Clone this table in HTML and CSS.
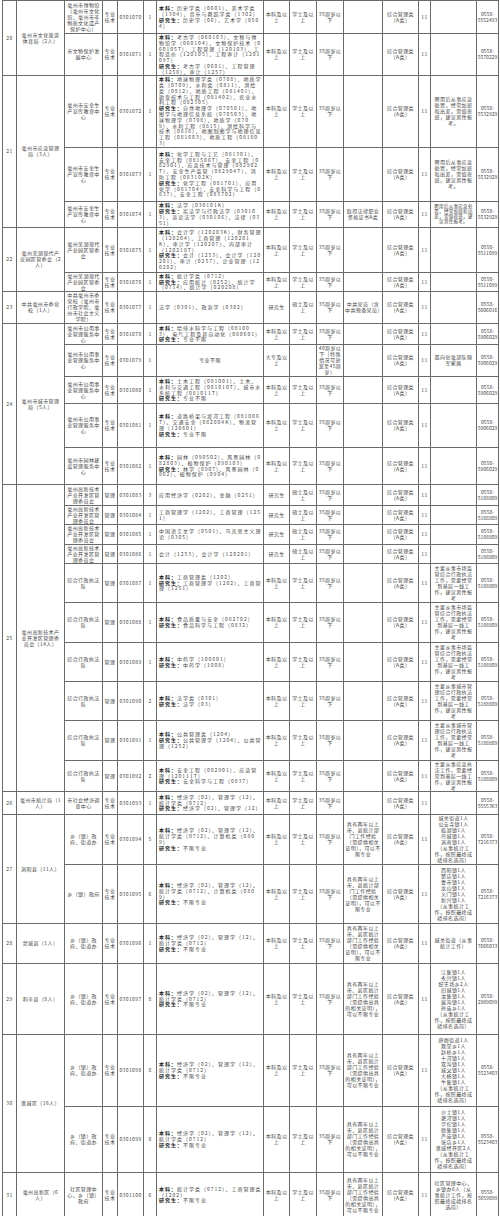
FILE: index.html
```html
<!DOCTYPE html>
<html lang="zh-CN">
<head>
<meta charset="utf-8">
<title>岗位表</title>
<link rel="stylesheet" href="styles.css">
</head>
<body>
<table class="grid">
<colgroup>
<col class="c1"><col class="c2"><col class="c3"><col class="c4"><col class="c5"><col class="c6"><col class="c7"><col class="c8"><col class="c9"><col class="c10"><col class="c11"><col class="c12"><col class="c13"><col class="c14"><col class="c15">
</colgroup>
<tbody>
<tr class="h33">
<td rowspan="2">20</td><td rowspan="2" class="dept">亳州市文化旅游体育局（2人）</td>
<td>亳州市博物馆（亳州市文化馆、亳州市非物质文化遗产保护中心）</td><td>专业技术</td><td>0301070</td><td>1</td>
<td class="m"><b>本科：</b>历史学类（0601）、美术学类（1304）、音乐与舞蹈学类（1302）<br><b>研究生：</b>历史学（06）、艺术学（0504）</td>
<td>本科及以上</td><td>学士及以上</td><td>35周岁以下</td><td></td><td>综合管理类（A类）</td><td>11</td><td></td><td class="tel">0558-5552493</td>
</tr>
<tr class="h39">
<td>市文物保护发展中心</td><td>专业技术</td><td>0301071</td><td>1</td>
<td class="m"><b>本科：</b>考古学（060103）、文物与博物馆学（060104）、文物保护技术（060105T）、工程管理（120103）、工程造价（120105）、工程审计（120109T）<br><b>研究生：</b>考古学（0601）、工程管理（1256）、审计（1257）</td>
<td>本科及以上</td><td>学士及以上</td><td>35周岁以下</td><td></td><td>综合管理类（A类）</td><td>11</td><td></td><td class="tel">0558-5570229</td>
</tr>
<tr class="h72">
<td rowspan="3">21</td><td rowspan="3" class="dept">亳州市应急管理局（3人）</td>
<td>亳州市安全生产宣传教育中心</td><td>专业技术</td><td>0301072</td><td>1</td>
<td class="m"><b>本科：</b>地球物理学类（0708）、地质学类（0709）、水利类（0811）、测绘类（0812）、地质工程（081401）、勘查技术与工程（081402）、农业水利工程（082305）<br><b>研究生：</b>自然地理学（070501）、地图学与地理信息系统（070503）、地球物理学（0708）、地质学（0709）、水利工程（0815）、测绘科学与技术（0816）、地图制图学与地理信息工程（081603）、地质工程（081803）</td>
<td>本科及以上</td><td>学士及以上</td><td>35周岁以下</td><td></td><td>综合管理类（A类）</td><td>11</td><td class="note">聘用后从事应急处置，经常加班和出差，需值夜班，建议男性报考。</td><td class="tel">0558-5532929</td>
</tr>
<tr class="h54">
<td>亳州市安全生产宣传教育中心</td><td>专业技术</td><td>0301073</td><td>1</td>
<td class="m"><b>本科：</b>化学工程与工艺（081301）、安全工程（081506T）、安全工程（082901）、应急技术与管理（082902T）、安全生产监管（082904T）、消防工程（083102K）<br><b>研究生：</b>化学工程（081701）、应用化学（081704）、安全科学与工程（0837）、安全工程（085702）</td>
<td>本科及以上</td><td>学士及以上</td><td>35周岁以下</td><td></td><td>综合管理类（A类）</td><td>11</td><td class="note">聘用后从事应急处置，经常加班和出差，需值夜班，建议男性报考。</td><td class="tel">0558-5532929</td>
</tr>
<tr class="h26">
<td>亳州市安全生产宣传教育中心</td><td>专业技术</td><td>0301074</td><td>1</td>
<td class="m"><b>本科：</b>法学（030101K）<br><b>研究生：</b>宪法学与行政法学（030103）、诉讼法学（030106）、法律（0351）</td>
<td>本科及以上</td><td>学士及以上</td><td>35周岁以下</td><td>取得法律职业资格证书A类</td><td>综合管理类（A类）</td><td>11</td><td class="note tight">聘用后从事应急处置，经常加班和出差，需值夜班，建议男性报考。</td><td class="tel">0558-5532929</td>
</tr>
<tr class="h45">
<td rowspan="2">22</td><td rowspan="2" class="dept">亳州芜湖现代产业园区管委会（2人）</td>
<td>亳州芜湖现代产业园区管委会</td><td>专业技术</td><td>0301075</td><td>1</td>
<td class="m"><b>本科：</b>会计学（120203K）、财务管理（120204）、工商管理（120201K）、审计学（120207）、内部审计（120218T）<br><b>研究生：</b>会计（1253）、会计学（120201）、审计（0257）、企业管理（120202）</td>
<td>本科及以上</td><td>学士及以上</td><td>35周岁以下</td><td></td><td>综合管理类（A类）</td><td>11</td><td></td><td class="tel">0558-5511099</td>
</tr>
<tr class="h19">
<td>亳州芜湖现代产业园区管委会</td><td>专业技术</td><td>0301076</td><td>1</td>
<td class="m"><b>本科：</b>统计学类（0712）<br><b>研究生：</b>应用统计（0252）、统计学（0714）、统计学（020208）</td>
<td>本科及以上</td><td>学士及以上</td><td>35周岁以下</td><td></td><td>综合管理类（A类）</td><td>11</td><td></td><td class="tel">0558-5511099</td>
</tr>
<tr class="h32">
<td>23</td><td class="dept">中共亳州市委党校（1人）</td>
<td>中共亳州市委党校（亳州市行政学院、亳州市社会主义学院）</td><td>专业技术</td><td>0301077</td><td>1</td>
<td class="m">法学（0301）、政治学（0302）</td>
<td>研究生</td><td>硕士及以上</td><td>35周岁以下</td><td>中共党员（含中共预备党员）</td><td>综合管理类（A类）</td><td>11</td><td></td><td class="tel">0558-5606016</td>
</tr>
<tr class="h21">
<td rowspan="5">24</td><td rowspan="5" class="dept">亳州市城市管理局（5人）</td>
<td>亳州市公用事业管理服务中心</td><td>专业技术</td><td>0301078</td><td>1</td>
<td class="m"><b>本科：</b>给排水科学与工程（081003）、电气工程及其自动化（080601）<br><b>研究生：</b>专业不限</td>
<td>本科及以上</td><td>学士及以上</td><td>35周岁以下</td><td></td><td>综合管理类（A类）</td><td>11</td><td></td><td class="tel">0558-5906029</td>
</tr>
<tr class="h32">
<td>亳州市公用事业管理服务中心</td><td>专业技术</td><td>0301079</td><td>1</td>
<td>专业不限</td>
<td>大专及以上</td><td></td><td>40周岁以下（特殊情况可放宽至45周岁）</td><td></td><td>综合管理类（A类）</td><td>11</td><td class="note">面向驻亳部队随军家属</td><td class="tel">0558-5906029</td>
</tr>
<tr class="h27">
<td>亳州市公用事业管理服务中心</td><td>专业技术</td><td>0301080</td><td>1</td>
<td class="m"><b>本科：</b>土木工程（081001）、土木、水利与交通工程（081010T）、城市水系统工程（081011T）<br><b>研究生：</b>专业不限</td>
<td>本科及以上</td><td>学士及以上</td><td>35周岁以下</td><td></td><td>综合管理类（A类）</td><td>11</td><td></td><td class="tel">0558-5906029</td>
</tr>
<tr class="h44">
<td>亳州市公用事业管理服务中心</td><td>专业技术</td><td>0301081</td><td>1</td>
<td class="m"><b>本科：</b>道路桥梁与渡河工程（081006T）、交通安全（082004K）、物流管理（120601）<br><b>研究生：</b>专业不限</td>
<td>本科及以上</td><td>学士及以上</td><td>35周岁以下</td><td></td><td>综合管理类（A类）</td><td>11</td><td></td><td class="tel">0558-5906029</td>
</tr>
<tr class="h37">
<td>亳州市园林建设管理服务中心</td><td>专业技术</td><td>0301082</td><td>1</td>
<td class="m"><b>本科：</b>园林（090502）、风景园林（082803）、植物保护（090103）<br><b>研究生：</b>林学（0907）、风景园林（0862）、植物保护（0904）</td>
<td>本科及以上</td><td>学士及以上</td><td>35周岁以下</td><td></td><td>综合管理类（A类）</td><td>11</td><td></td><td class="tel">0558-5906029</td>
</tr>
<tr class="h21">
<td rowspan="10">25</td><td rowspan="10" class="dept">亳州高新技术产业开发区管理委员会（14人）</td>
<td>亳州高新技术产业开发区管理委员会</td><td>管理</td><td>0301083</td><td>3</td>
<td class="m">应用经济学（0202）、金融（0251）</td>
<td>研究生</td><td>硕士及以上</td><td>35周岁以下</td><td></td><td>综合管理类（A类）</td><td>11</td><td></td><td class="tel">0558-5188809</td>
</tr>
<tr class="h19">
<td>亳州高新技术产业开发区管理委员会</td><td>管理</td><td>0301084</td><td>1</td>
<td class="m">工商管理学（1202）、工商管理（1251）</td>
<td>研究生</td><td>硕士及以上</td><td>35周岁以下</td><td></td><td>综合管理类（A类）</td><td>11</td><td></td><td class="tel">0558-5188809</td>
</tr>
<tr class="h20">
<td>亳州高新技术产业开发区管理委员会</td><td>管理</td><td>0301085</td><td>1</td>
<td class="m">中国语言文学（0501）、马克思主义理论（0305）</td>
<td>研究生</td><td>硕士及以上</td><td>35周岁以下</td><td></td><td>综合管理类（A类）</td><td>11</td><td></td><td class="tel">0558-5188809</td>
</tr>
<tr class="h19">
<td>亳州高新技术产业开发区管理委员会</td><td>管理</td><td>0301086</td><td>1</td>
<td class="m">会计（1253）、会计学（120201）</td>
<td>研究生</td><td>硕士及以上</td><td>35周岁以下</td><td></td><td>综合管理类（A类）</td><td>11</td><td></td><td class="tel">0558-5188809</td>
</tr>
<tr class="h39">
<td>综合行政执法队</td><td>管理</td><td>0301087</td><td>1</td>
<td class="m"><b>本科：</b>工商管理类（1202）<br><b>研究生：</b>工商管理学（1202）、工商管理（1251）</td>
<td>本科及以上</td><td>学士及以上</td><td>35周岁以下</td><td></td><td>综合管理类（A类）</td><td>11</td><td class="note">主要从事市场监管综合行政执法工作，需要经常到基层一线工作，建议男性报考</td><td class="tel">0558-5188809</td>
</tr>
<tr class="h40">
<td>综合行政执法队</td><td>管理</td><td>0301088</td><td>1</td>
<td class="m"><b>本科：</b>食品质量与安全（082702）<br><b>研究生：</b>食品科学与工程（0832）</td>
<td>本科及以上</td><td>学士及以上</td><td>35周岁以下</td><td></td><td>综合管理类（A类）</td><td>11</td><td class="note">主要从事市场监管综合行政执法工作，需要经常到基层一线工作，建议男性报考</td><td class="tel">0558-5188809</td>
</tr>
<tr class="h39">
<td>综合行政执法队</td><td>管理</td><td>0301089</td><td>1</td>
<td class="m"><b>本科：</b>中药学（100801）<br><b>研究生：</b>中药学（1008）</td>
<td>本科及以上</td><td>学士及以上</td><td>35周岁以下</td><td></td><td>综合管理类（A类）</td><td>11</td><td class="note">主要从事市场监管综合行政执法工作，需要经常到基层一线工作，建议男性报考</td><td class="tel">0558-5188809</td>
</tr>
<tr class="h39">
<td>综合行政执法队</td><td>管理</td><td>0301090</td><td>2</td>
<td class="m"><b>本科：</b>法学类（0301）<br><b>研究生：</b>法学（03）</td>
<td>本科及以上</td><td>学士及以上</td><td>35周岁以下</td><td></td><td>综合管理类（A类）</td><td>11</td><td class="note">主要从事城市管理综合行政执法工作，需要经常到基层一线工作，建议男性报考</td><td class="tel">0558-5188809</td>
</tr>
<tr class="h40">
<td>综合行政执法队</td><td>管理</td><td>0301091</td><td>1</td>
<td class="m"><b>本科：</b>公共管理类（1204）<br><b>研究生：</b>公共管理学（1204）、公共管理（1252）</td>
<td>本科及以上</td><td>学士及以上</td><td>35周岁以下</td><td></td><td>综合管理类（A类）</td><td>11</td><td class="note">主要从事城市管理综合行政执法工作，需要经常到基层一线工作，建议男性报考</td><td class="tel">0558-5188809</td>
</tr>
<tr class="h31">
<td>综合行政执法队</td><td>管理</td><td>0301092</td><td>2</td>
<td class="m"><b>本科：</b>安全工程（082901）、应急管理（120111T）<br><b>研究生：</b>安全科学与工程（0837）</td>
<td>本科及以上</td><td>学士及以上</td><td>35周岁以下</td><td></td><td>综合管理类（A类）</td><td>11</td><td class="note">主要从事应急执法工作，需要经常到基层一线工作，建议男性报考</td><td class="tel">0558-5188809</td>
</tr>
<tr class="h23">
<td>26</td><td class="dept">亳州市统计局（1人）</td>
<td>市社会经济调查中心</td><td>专业技术</td><td>0301093</td><td>1</td>
<td class="m"><b>本科：</b>经济学（02）、管理学（12）、统计学类（0712）<br><b>研究生：</b>经济学（02）、管理学（12）</td>
<td>本科及以上</td><td>学士及以上</td><td>35周岁以下</td><td></td><td>综合管理类（A类）</td><td>11</td><td></td><td class="tel">0558-5555363</td>
</tr>
<tr class="h50">
<td rowspan="2">27</td><td rowspan="2" class="dept">涡阳县（11人）</td>
<td>乡（镇）政府、街道办</td><td>专业技术</td><td>0301094</td><td>5</td>
<td class="m"><b>本科：</b>经济学（02）、管理学（12）、统计学类（0712）、计算机类（0809）<br><b>研究生：</b>不限专业</td>
<td>本科及以上</td><td>学士及以上</td><td>35周岁以下</td><td>具有两年以上市、县统计部门工作经验（需提供相关证明），可以不限专业</td><td>综合管理类（A类）</td><td>11</td><td class="note">城关街道1人<br>公安寺镇1人<br>临湖镇1人<br>丹城镇1人<br>涡南镇1人<br>（从事统计工作，按照最终成绩排名选岗）</td><td class="tel">0558-7216373</td>
</tr>
<tr class="h59">
<td>乡（镇）政府</td><td>专业技术</td><td>0301095</td><td>6</td>
<td class="m"><b>本科：</b>经济学（02）、管理学（12）、统计学类（0712）、计算机类（0809）<br><b>研究生：</b>不限专业</td>
<td>本科及以上</td><td>学士及以上</td><td>35周岁以下</td><td>具有两年以上市、县统计部门工作经验（需提供相关证明），可以不限专业</td><td>综合管理类（A类）</td><td>11</td><td class="note">西阳镇1人<br>楚店镇1人<br>曹市镇1人<br>龙山镇1人<br>义门镇1人<br>新兴镇1人<br>（从事统计工作，按照最终成绩排名选岗）</td><td class="tel">0558-7216373</td>
</tr>
<tr class="h40">
<td>28</td><td class="dept">蒙城县（1人）</td>
<td>乡（镇）政府、街道办</td><td>专业技术</td><td>0301096</td><td>1</td>
<td class="m"><b>本科：</b>经济学（02）、管理学（12）、统计学类（0712）<br><b>研究生：</b>不限专业</td>
<td>本科及以上</td><td>学士及以上</td><td>35周岁以下</td><td>具有两年以上市、县区统计部门工作经验（需提供相关证明），可以不限专业</td><td>综合管理类（A类）</td><td>11</td><td class="note">城关街道（从事统计工作）</td><td class="tel">0558-7666033</td>
</tr>
<tr class="h71">
<td>29</td><td class="dept">利辛县（8人）</td>
<td>乡（镇）政府、街道办</td><td>专业技术</td><td>0301097</td><td>8</td>
<td class="m"><b>本科：</b>经济学（02）、管理学（12）、统计学类（0712）<br><b>研究生：</b>不限专业</td>
<td>本科及以上</td><td>学士及以上</td><td>35周岁以下</td><td>具有两年以上市、县区统计部门工作经验（需提供出具的相关证明），可以不限专业</td><td>综合管理类（A类）</td><td>11</td><td class="note">江集镇1人<br>永兴镇1人<br>纪王场乡2人<br>旧城镇1人<br>汝集镇1人<br>展沟镇1人<br>孙庙乡1人<br>（从事统计工作，按照最终成绩排名选岗）</td><td class="tel">0558-2989099</td>
</tr>
<tr class="h72">
<td rowspan="2">30</td><td rowspan="2" class="dept">谯城区（16人）</td>
<td>乡（镇）政府、街道办</td><td>专业技术</td><td>0301098</td><td>8</td>
<td class="m"><b>本科：</b>经济学（02）、管理学（12）、统计学类（0712）<br><b>研究生：</b>不限专业</td>
<td>本科及以上</td><td>学士及以上</td><td>35周岁以下</td><td>具有两年以上市、县区统计部门工作经验（需提供出具的相关证明），可以不限专业</td><td>综合管理类（A类）</td><td>11</td><td class="note">薛阁街道1人<br>观堂乡1人<br>赵桥乡1人<br>十河镇1人<br>双沟镇1人<br>城父镇1人<br>大杨镇1人<br>牛集镇1人<br>（从事统计工作，按照最终成绩排名选岗）</td><td class="tel">0558-5523403</td>
</tr>
<tr class="h66">
<td>乡（镇）政府、街道办</td><td>专业技术</td><td>0301099</td><td>8</td>
<td class="m"><b>本科：</b>经济学（02）、管理学（12）、统计学类（0712）<br><b>研究生：</b>不限专业</td>
<td>本科及以上</td><td>学士及以上</td><td>35周岁以下</td><td>具有两年以上市、县区统计部门工作经验（需提供出具的相关证明），可以不限专业</td><td>综合管理类（A类）</td><td>11</td><td class="note">沙土镇1人<br>淝河镇1人<br>华佗镇1人<br>颜集镇1人<br>芦庙镇1人<br>张店乡1人<br>谯城经开区2人<br>（从事统计工作，按照最终成绩排名选岗）</td><td class="tel">0558-5523403</td>
</tr>
<tr class="h45">
<td>31</td><td class="dept">亳州高新区（6人）</td>
<td>社区管理中心、乡（镇）政府</td><td>专业技术</td><td>0301100</td><td>6</td>
<td class="m"><b>本科：</b>统计学类（0712）、工商管理类（1202）<br><b>研究生：</b>不限专业</td>
<td>本科及以上</td><td>学士及以上</td><td>35周岁以下</td><td>具有两年以上市、县区统计部门工作经验（需提供出具的相关证明），可以不限专业</td><td>综合管理类（A类）</td><td>11</td><td class="note">社区管理中心、乡镇办6人（从事统计工作，按照最终成绩排名选岗）</td><td class="tel">0558-5659099</td>
</tr>
</tbody>
</table>
</body>
</html>
```
FILE: styles.css
```css
html, body {
  margin: 0;
  padding: 0;
  background: #ffffff;
}
body {
  font-family: "Noto Sans CJK SC", "Noto Sans", sans-serif;
  color: #444444;
}
.grid {
  border-collapse: collapse;
  table-layout: fixed;
  width: 496px;
  margin: 0 0 0 2px;
  font-size: 5px;
  line-height: 6px;
}
.grid td {
  border: 1px solid #6a6a6a;
  padding: 0 1px;
  text-align: center;
  vertical-align: middle;
  overflow: hidden;
  word-break: break-all;
  letter-spacing: 0.4px;
}
.grid td.m {
  text-align: left;
  padding-left: 2px;
  letter-spacing: 1px;
  line-height: 5.8px;
}
.grid td.dept {
  padding: 0 3px;
}
.grid td.note {
  padding: 0 3px;
}
.grid td.tight {
  font-size: 4.5px;
  line-height: 5px;
  letter-spacing: 0.3px;
}
.grid td.tel {
  word-break: normal;
  overflow-wrap: anywhere;
  padding: 0;
  letter-spacing: 0;
}
.grid b {
  font-weight: 700;
  color: #222222;
}
.c1 { width: 14px; }
.c2 { width: 48px; }
.c3 { width: 38px; }
.c4 { width: 15px; }
.c5 { width: 26px; }
.c6 { width: 13px; }
.c7 { width: 107px; }
.c8 { width: 26px; }
.c9 { width: 27px; }
.c10 { width: 27px; }
.c11 { width: 39px; }
.c12 { width: 36px; }
.c13 { width: 12px; }
.c14 { width: 46px; }
.c15 { width: 22px; }
.h19 { height: 19px; }
.h20 { height: 20px; }
.h21 { height: 21px; }
.h23 { height: 23px; }
.h26 { height: 26px; }
.h27 { height: 27px; }
.h31 { height: 31px; }
.h32 { height: 32px; }
.h33 { height: 33px; }
.h37 { height: 37px; }
.h39 { height: 39px; }
.h40 { height: 40px; }
.h44 { height: 44px; }
.h45 { height: 45px; }
.h50 { height: 50px; }
.h54 { height: 54px; }
.h59 { height: 59px; }
.h66 { height: 66px; }
.h71 { height: 71px; }
.h72 { height: 72px; }
```
